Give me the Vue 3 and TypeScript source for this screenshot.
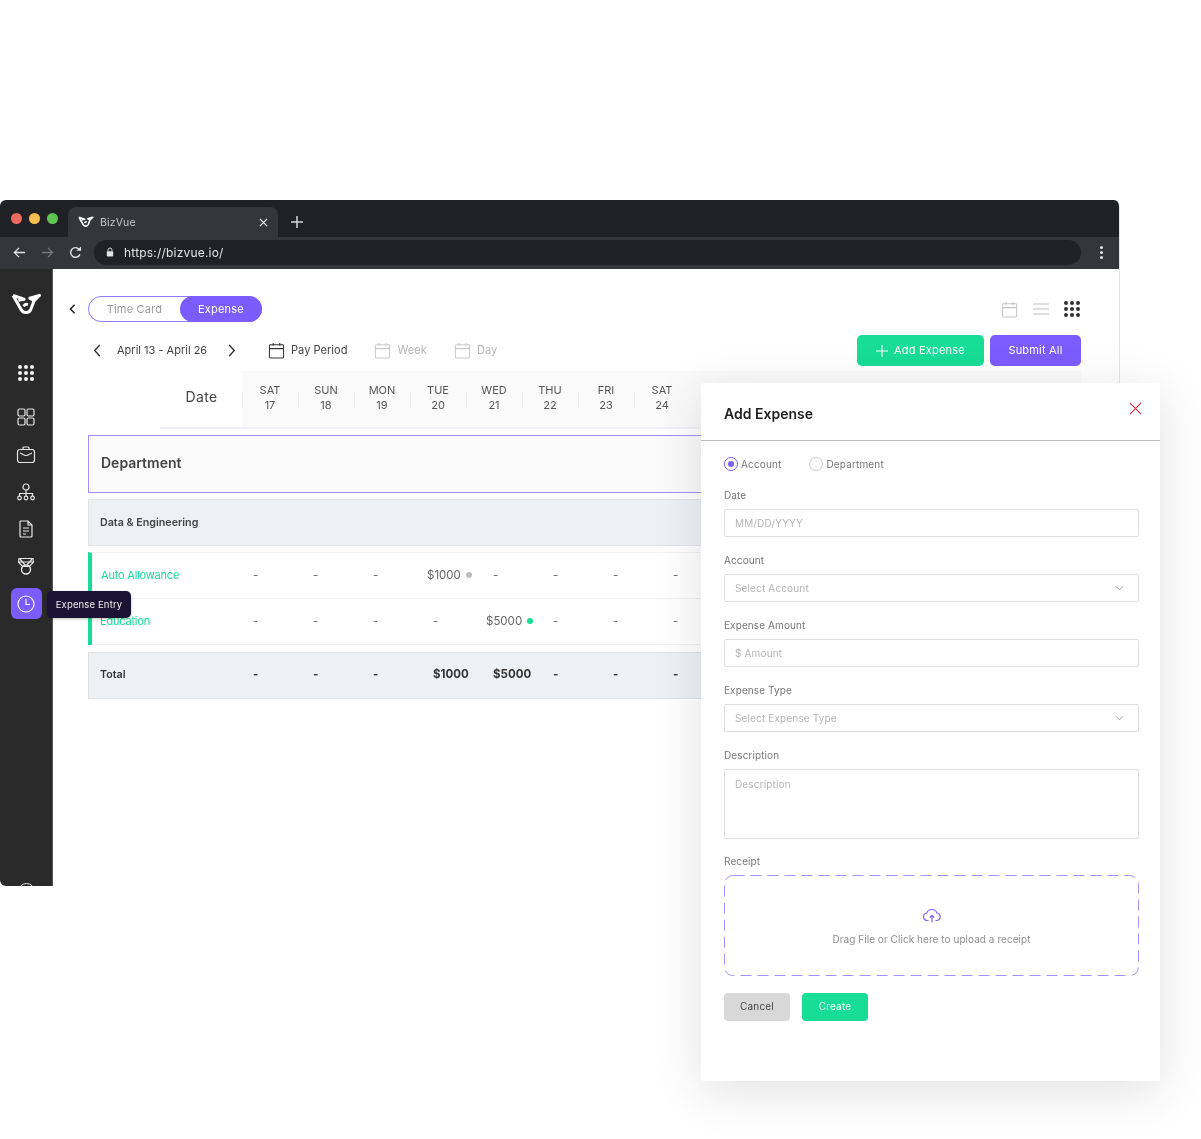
<script setup lang="ts">
const days = [
  ['SAT', '17'], ['SUN', '18'], ['MON', '19'], ['TUE', '20'], ['WED', '21'],
  ['THU', '22'], ['FRI', '23'], ['SAT', '24'],
]
const rows = [
  { name: 'Auto Allowance', cells: ['-', '-', '-', '$1000', '-', '-', '-', '-'], dot: 'grey' },
  { name: 'Education', cells: ['-', '-', '-', '-', '$5000', '-', '-', '-'], dot: 'green' },
]
const totals = ['-', '-', '-', '$1000', '$5000', '-', '-', '-']
const navIcons = ['dash', 'case', 'org', 'doc', 'medal']
</script>

<template>
  <div class="page">
    <div class="browser">
      <div class="tabstrip">
        <div class="lights"><i class="red"></i><i class="yellow"></i><i class="green"></i></div>
        <div class="tab">
          <svg class="favicon" viewBox="0 0 32 24" width="16" height="12" fill="none" stroke="#fff" stroke-width="3.2" stroke-linejoin="round"><path d="M2 2.5 L13.5 6.5 L7.5 7.5 M2 2.5 L10.5 17.5 A5.6 5.6 0 0 0 20.5 17 L24 8 L19.5 5.5 L29.5 2.5 L24 8"/><path d="M13 14 A3.8 3.8 0 0 1 17.5 12"/></svg>
          <span class="tabname">BizVue</span>
          <svg class="tabclose" viewBox="0 0 10 10" width="9" height="9"><path d="M1 1 L9 9 M9 1 L1 9" stroke="#e8e8e8" stroke-width="1.4"/></svg>
        </div>
        <svg class="newtab" viewBox="0 0 12 12" width="12" height="12"><path d="M6 0 V12 M0 6 H12" stroke="#d8d8d8" stroke-width="1.5"/></svg>
      </div>
      <div class="toolbar">
        <svg viewBox="0 0 14 14" width="13" height="13"><path d="M13 7 H1.5 M6.5 2 L1.5 7 L6.5 12" fill="none" stroke="#e4e4e4" stroke-width="1.4"/></svg>
        <svg viewBox="0 0 14 14" width="13" height="13"><path d="M1 7 H12.5 M7.5 2 L12.5 7 L7.5 12" fill="none" stroke="#77787b" stroke-width="1.4"/></svg>
        <svg viewBox="0 0 14 14" width="13" height="13"><path d="M11.8 9 A5.2 5.2 0 1 1 11 3.6" fill="none" stroke="#e4e4e4" stroke-width="1.5"/><path d="M8 5 H13 V0.5 Z" fill="#e4e4e4"/></svg>
        <div class="urlbar">
          <svg viewBox="0 0 10 12" width="8" height="10"><path d="M2.5 5 V3.5 A2.5 2.5 0 0 1 7.5 3.5 V5" fill="none" stroke="#e4e4e4" stroke-width="1.2"/><rect x="1" y="5" width="8" height="6.5" rx="1" fill="#e4e4e4"/></svg>
          <span>https://bizvue.io/</span>
        </div>
        <div class="kebab"><i></i><i></i><i></i></div>
      </div>
      <div class="app">
        <aside class="side">
          <svg class="logo" viewBox="0 0 32 24" width="31" height="23" fill="none" stroke="#fff" stroke-width="3.2" stroke-linejoin="round"><path d="M2 2.5 L13.5 6.5 L7.5 7.5 M2 2.5 L10.5 17.5 A5.6 5.6 0 0 0 20.5 17 L24 8 L19.5 5.5 L29.5 2.5 L24 8"/><path d="M13 14 A3.8 3.8 0 0 1 17.5 12"/></svg>
          <div class="dots light"><i v-for="n in 9" :key="n"></i></div>
          <div class="navicons">
            <svg v-for="ic in navIcons" :key="ic" viewBox="0 0 20 20" width="20" height="20" fill="none" stroke="#e6e6e6" stroke-width="1.2">
              <template v-if="ic === 'dash'">
                <rect x="2" y="2" width="7" height="7" rx="1.4"/><rect x="11" y="2" width="7" height="7" rx="1.4"/><rect x="2" y="11" width="7" height="7" rx="1.4"/><rect x="11" y="11" width="7" height="7" rx="1.4"/>
              </template>
              <template v-else-if="ic === 'case'">
                <rect x="1.5" y="4.5" width="17" height="13" rx="2.5"/><path d="M7 4.5 V3 A1 1 0 0 1 8 2 H12 A1 1 0 0 1 13 3 V4.5 M4 8 L9 10.5 H11 L16 8"/>
              </template>
              <template v-else-if="ic === 'org'">
                <circle cx="10" cy="5" r="3"/><circle cx="3.5" cy="16" r="1.8"/><circle cx="10" cy="16" r="1.8"/><circle cx="16.5" cy="16" r="1.8"/><path d="M10 8 V14 M3.5 14 V11.5 H16.5 V14"/>
              </template>
              <template v-else-if="ic === 'doc'">
                <path d="M4.5 2 H12 L16 6 V17 A1 1 0 0 1 15 18 H5 A1 1 0 0 1 4 17 V2.5 Z M12 2 V6 H16 M7 9 H13 M7 12 H13 M7 15 H10"/>
              </template>
              <template v-else>
                <path d="M3 2.5 H17 L17.5 6 L13.5 10.5 H6.5 L2.5 6 Z M4 3 L9 9 M16 3 L11 9 M3 6 H17"/><circle cx="10" cy="13.5" r="4.5" stroke-width="1.4"/>
              </template>
            </svg>
          </div>
          <div class="active">
            <svg viewBox="0 0 18 18" width="18" height="18" fill="none" stroke="#fff" stroke-width="1.1"><circle cx="9" cy="9" r="8"/><path d="M9 4 V9.5 H13"/></svg>
          </div>
          <div class="help"></div>
        </aside>

        <main class="content">
          <div class="toprow">
            <svg class="chev" viewBox="0 0 8 12" width="7" height="10"><path d="M6.5 1 L1.5 6 L6.5 11" fill="none" stroke="#222" stroke-width="1.8"/></svg>
            <div class="switch">
              <span class="off">Time Card</span>
              <span class="on">Expense</span>
            </div>
            <div class="views">
              <svg viewBox="0 0 18 18" width="17" height="17" fill="none" stroke="#c4c4c4" stroke-width="1.1"><rect x="1.5" y="3" width="15" height="14" rx="1"/><path d="M1.5 7 H16.5 M5.5 1 V4 M12.5 1 V4"/></svg>
              <svg viewBox="0 0 16 12" width="16" height="12" fill="none" stroke="#bdbdbd" stroke-width="1.2"><path d="M0 1 H16 M0 6 H16 M0 11 H16"/></svg>
              <div class="dots dark"><i v-for="n in 9" :key="n"></i></div>
            </div>
          </div>

          <div class="filterrow">
            <svg class="arrow" viewBox="0 0 8 14" width="8" height="13"><path d="M7 1 L1.5 7 L7 13" fill="none" stroke="#333" stroke-width="1.5"/></svg>
            <span class="range">April 13 - April 26</span>
            <svg class="arrow next" viewBox="0 0 8 14" width="8" height="13"><path d="M1 1 L6.5 7 L1 13" fill="none" stroke="#333" stroke-width="1.5"/></svg>
            <div class="period">
              <svg viewBox="0 0 18 18" width="17" height="17" fill="none" stroke="#333" stroke-width="1.1"><rect x="1.5" y="3" width="15" height="14" rx="1"/><path d="M1.5 7 H16.5 M5.5 1 V4 M12.5 1 V4"/></svg>
              <span>Pay Period</span>
            </div>
            <div class="period dim">
              <svg viewBox="0 0 18 18" width="17" height="17" fill="none" stroke="#c9c9c9" stroke-width="1.1"><rect x="1.5" y="3" width="15" height="14" rx="1"/><path d="M1.5 7 H16.5 M5.5 1 V4 M12.5 1 V4"/></svg>
              <span>Week</span>
            </div>
            <div class="period dim">
              <svg viewBox="0 0 18 18" width="17" height="17" fill="none" stroke="#c9c9c9" stroke-width="1.1"><rect x="1.5" y="3" width="15" height="14" rx="1"/><path d="M1.5 7 H16.5 M5.5 1 V4 M12.5 1 V4"/></svg>
              <span>Day</span>
            </div>
            <div class="actions">
              <button class="btn add"><svg viewBox="0 0 12 12" width="12" height="12"><path d="M6 0 V12 M0 6 H12" stroke="#fff" stroke-width="1.1"/></svg>Add Expense</button>
              <button class="btn submit">Submit All</button>
            </div>
          </div>

          <div class="dayhead">
            <div class="datelabel">Date</div>
            <div class="daycells">
              <div v-for="(d, i) in days" :key="i" class="day"><span>{{ d[0] }}</span><span>{{ d[1] }}</span></div>
            </div>
          </div>

          <div class="deptrow">Department</div>
          <div class="grouprow">Data &amp; Engineering</div>

          <div class="lines">
            <div v-for="r in rows" :key="r.name" class="line">
              <div class="linename">{{ r.name }}</div>
              <div v-for="(c, i) in r.cells" :key="i" class="cell" :class="{ amount: c !== '-' }">
                {{ c }}<i v-if="c !== '-'" class="dot" :class="r.dot"></i>
              </div>
            </div>
          </div>

          <div class="totalrow">
            <div class="totalname">Total</div>
            <div v-for="(c, i) in totals" :key="i" class="cell">{{ c }}</div>
          </div>
        </main>
      </div>
    </div>

    <section class="modal">
      <header class="modalhead">
        <h2>Add Expense</h2>
        <svg viewBox="0 0 14 14" width="13" height="13"><path d="M1 1 L13 13 M13 1 L1 13" stroke="#e0223c" stroke-width="1.1"/></svg>
      </header>
      <div class="form">
        <div class="radios">
          <label class="radio"><i class="ring sel"><b></b></i>Account</label>
          <label class="radio"><i class="ring"></i>Department</label>
        </div>
        <div class="field"><span class="flabel">Date</span><div class="input">MM/DD/YYYY</div></div>
        <div class="field"><span class="flabel">Account</span><div class="input">Select Account<svg viewBox="0 0 10 6" width="9" height="6"><path d="M1 1 L5 5 L9 1" fill="none" stroke="#999" stroke-width="1.1"/></svg></div></div>
        <div class="field"><span class="flabel">Expense Amount</span><div class="input">$ Amount</div></div>
        <div class="field"><span class="flabel">Expense Type</span><div class="input">Select Expense Type<svg viewBox="0 0 10 6" width="9" height="6"><path d="M1 1 L5 5 L9 1" fill="none" stroke="#999" stroke-width="1.1"/></svg></div></div>
        <div class="field"><span class="flabel">Description</span><div class="input area">Description</div></div>
        <div class="field receipt">
          <span class="flabel">Receipt</span>
          <div class="drop">
            <svg class="dash" width="415" height="101" viewBox="0 0 415 101"><rect x="0.5" y="0.5" width="414" height="100" rx="9" fill="none" stroke="#a48fff" stroke-width="1" stroke-dasharray="11 6"/></svg>
            <svg viewBox="0 0 20 16" width="20" height="16" fill="none" stroke="#7b5cff" stroke-width="1.1"><path d="M6.5 13.5 H5 A3.8 3.8 0 0 1 4.7 6 A5.5 5.5 0 0 1 15 6 A3.8 3.8 0 0 1 15 13.5 H13.5 M10 15.5 V8.5 M7.8 10.5 L10 8.3 L12.2 10.5"/></svg>
            <span>Drag File or Click here to upload a receipt</span>
          </div>
        </div>
        <div class="formbtns">
          <button class="fbtn cancel">Cancel</button>
          <button class="fbtn create">Create</button>
        </div>
      </div>
    </section>

    <div class="tooltip">Expense Entry</div>
  </div>
</template>

<style>
html, body { margin: 0; background: #fff; }
</style>

<style scoped>
* { box-sizing: border-box; }
.page {
  position: relative;
  width: 1201px;
  height: 1139px;
  padding-top: 200px;
  overflow: hidden;
  background: #fff;
  font-family: Inter, "Open Sans", sans-serif;
  color: #333;
  filter: blur(0.35px);
}
button { font-family: inherit; border: 0; }
i { display: block; }

.browser {
  width: 1120px;
  height: 686px;
  border-radius: 6px 6px 0 6px;
  overflow: hidden;
  display: flex;
  flex-direction: column;
  border-right: 1px solid #e4e4e4;
}
.tabstrip {
  height: 37px;
  background: #202124;
  display: flex;
  align-items: flex-end;
  flex: none;
}
.lights { display: flex; gap: 7px; padding: 0 0 13px 11px; width: 68px; }
.lights i { width: 11px; height: 11px; border-radius: 50%; }
.lights .red { background: #ed6a5e; }
.lights .yellow { background: #f5bf4f; }
.lights .green { background: #61c554; }
.tab {
  width: 210px;
  height: 30px;
  background: #35363a;
  border-radius: 8px 8px 0 0;
  display: flex;
  align-items: center;
  padding: 0 10px;
}
.favicon { margin-right: 6px; }
.tabname { font-size: 10.5px; color: #c8c8c8; letter-spacing: .15px; flex: 1; padding-top: 1px; }
.newtab { margin: 0 0 9px 13px; }
.toolbar {
  height: 32px;
  background: #35363a;
  display: flex;
  align-items: center;
  gap: 15px;
  padding: 0 0 2px 13px;
  flex: none;
}
.urlbar {
  width: 987px;
  height: 25px;
  margin-left: -3px;
  border-radius: 13px;
  background: #202124;
  display: flex;
  align-items: center;
  gap: 10px;
  padding-left: 12px;
  font-size: 12px;
  color: #e4e4e4;
  letter-spacing: .2px;
}
.kebab { display: flex; flex-direction: column; gap: 2px; margin-left: 4px; }
.kebab i { width: 3px; height: 3px; border-radius: 50%; background: #e4e4e4; }

.app { flex: 1; display: flex; min-height: 0; background: #fff; }
.side {
  width: 53px;
  flex: none;
  background: #2a2a2a;
  display: flex;
  flex-direction: column;
  align-items: center;
  padding-top: 24px;
  border-right: 1px solid #555;
  position: relative;
}
.logo { margin-bottom: 49px; flex: none; }
.dots { display: grid; grid-template-columns: repeat(3, 4px); gap: 2px; }
.dots i { width: 4px; height: 4px; border-radius: 50%; }
.dots.light i { background: #f2f2f2; }
.dots.dark i { background: #333; }
.navicons { display: flex; flex-direction: column; gap: 17px; margin-top: 26px; }
.navicons svg:first-child { margin-bottom: 1px; }
.active {
  width: 31px;
  height: 31px;
  border-radius: 6px;
  background: #7b5cff;
  display: flex;
  align-items: center;
  justify-content: center;
  margin-top: 12px;
}
.help {
  position: absolute;
  left: 18px;
  top: 614px;
  width: 17px;
  height: 17px;
  border: 1px solid #e6e6e6;
  border-radius: 50%;
}

.content { flex: 1; padding: 27px 38px 0 35px; min-width: 0; overflow: hidden; }
.toprow { display: flex; align-items: center; height: 26px; }
.chev { margin: 0 12px 0 -19px; }
.switch {
  width: 174px;
  height: 26px;
  border: 1px solid #8f7aff;
  border-radius: 13px;
  display: flex;
  font-size: 11px;
  letter-spacing: .2px;
  align-items: stretch;
}
.off { width: 91px; color: #9a9a9a; display: flex; align-items: center; justify-content: center; }
.on { flex: 1; margin: -1px -1px -1px 0; background: #7b5cff; color: #fff; border-radius: 13px; display: flex; align-items: center; justify-content: center; }
.views { margin-left: auto; display: flex; align-items: center; gap: 15px; padding-right: 1px; }

.filterrow { display: flex; align-items: center; height: 31px; margin-top: 13px; padding-left: 5px; }
.arrow { flex: none; }
.range { font-size: 11px; color: #444; margin: -2px 0 0 16px; width: 92px; white-space: nowrap; }
.next { margin-left: 19px; margin-right: 32px; }
.period { display: flex; align-items: center; gap: 6px; font-size: 11.1px; color: #444; margin-right: 27px; }
.period span { margin-top: -2px; }
.period.dim { color: #b5b5b5; }
.actions { margin-left: auto; display: flex; gap: 6px; }
.btn {
  height: 31px;
  border-radius: 5px;
  color: #fff;
  font-size: 11px;
  letter-spacing: .2px;
  display: flex;
  align-items: center;
  justify-content: center;
  gap: 6px;
  padding: 0 0 2px;
}
.add { width: 127px; background: #17dd96; }
.add svg { margin-top: 2px; }
.submit { width: 91px; background: #7b5cff; }

.dayhead { display: flex; margin: 5px 0 0 72px; height: 58px; border-bottom: 2px solid #f0f2f5; }
.datelabel { width: 82px; display: flex; align-items: center; justify-content: center; font-size: 14px; color: #444; padding: 0 0 6px 1px; letter-spacing: .3px; }
.daycells { flex: 1; display: flex; background: #fafafa; align-items: center; overflow: hidden; }
.day {
  position: relative;
  flex: none;
  width: 56px;
  height: 34px;
  margin-top: -4px;
  display: flex;
  flex-direction: column;
  align-items: center;
  justify-content: center;
  gap: 1px;
  font-size: 11px;
  line-height: 14px;
  color: #555;
}
.day::before {
  content: "";
  position: absolute;
  left: 0;
  top: 12px;
  width: 1px;
  height: 16px;
  background: #eaeaea;
}

.deptrow {
  margin-top: 6px;
  height: 58px;
  border: 1px solid #a08dff;
  background: #fafafa;
  display: flex;
  align-items: center;
  padding: 0 0 3px 12px;
  font-size: 14px;
  font-weight: 600;
  color: #444;
}
.grouprow {
  margin-top: 6px;
  height: 47px;
  background: #eef1f4;
  border: 1px solid #e2e4e6;
  display: flex;
  align-items: center;
  padding: 0 0 1px 11px;
  font-size: 10.7px;
  font-weight: 600;
  color: #444;
}
.lines { margin-top: 6px; border-left: 4px solid #17dd96; border-top: 1px solid #f3f3f3; }
.line {
  height: 46px;
  display: grid;
  grid-template-columns: 161px repeat(8, 60px);
  align-items: center;
  border-bottom: 1px solid #f0f0f0;
  padding-bottom: 2px;
  font-size: 11.5px;
  color: #666;
}
.linename { color: #17dd96; padding-left: 9px; font-size: 11px; letter-spacing: -.2px; }
.line:last-child .linename { padding-left: 8px; }
.line:last-child .amount { margin-left: -7px; }
.cell { display: flex; align-items: center; white-space: nowrap; }
.amount { margin-left: -6px; }
.dot { width: 6px; height: 6px; border-radius: 50%; margin-left: 5px; margin-top: 1px; }
.dot.grey { background: #bdbdbd; }
.dot.green { background: #17dd96; }
.totalrow {
  margin-top: 7px;
  height: 47px;
  background: #eef1f4;
  border: 1px solid #e0e2e4;
  padding-bottom: 3px;
  display: grid;
  grid-template-columns: 164px repeat(8, 60px);
  align-items: center;
  font-size: 11.5px;
  font-weight: 700;
  color: #333;
}
.totalname { padding-left: 11px; font-size: 10.7px; font-weight: 600; }

.modal {
  position: absolute;
  left: 701px;
  top: 383px;
  width: 459px;
  height: 698px;
  background: #fff;
  border-radius: 4px 0 0 4px;
  box-shadow: 0 10px 50px rgba(40, 40, 60, .14);
}
.modalhead {
  height: 58px;
  border-bottom: 1px solid #bdbdbd;
  display: flex;
  align-items: center;
  justify-content: space-between;
  padding: 0 18px 0 23px;
}
.modalhead h2 { margin: 3px 0 0; font-size: 14px; font-weight: 600; color: #222; }
.modalhead svg { margin-top: -6px; }
.form { padding: 0 21px 0 23px; }
.radios { display: flex; gap: 28px; height: 47px; align-items: center; padding-bottom: 1px; }
.radio { display: flex; align-items: center; gap: 3px; font-size: 10px; color: #777; letter-spacing: .15px; }
.ring { width: 14px; height: 14px; border: 1px solid #ccc; border-radius: 50%; display: flex; align-items: center; justify-content: center; }
.ring.sel { border-color: #7b5cff; border-width: 1.5px; }
.ring b { width: 6px; height: 6px; border-radius: 50%; background: #7b5cff; }
.field { display: flex; flex-direction: column; margin-bottom: 16px; }
.flabel { height: 14px; line-height: 14px; font-size: 10px; color: #777; letter-spacing: .1px; margin-bottom: 7px; }
.input {
  height: 28px;
  border: 1px solid #ddd;
  border-radius: 2px;
  display: flex;
  align-items: center;
  justify-content: space-between;
  padding: 0 14px 1px 10px;
  font-size: 10px;
  color: #b5b5b5;
  letter-spacing: .15px;
}
.area { height: 70px; align-items: flex-start; padding-top: 8px; }
.receipt { margin-top: -1px; margin-bottom: 0; }
.drop {
  position: relative;
  height: 101px;
  display: flex;
  flex-direction: column;
  align-items: center;
  justify-content: center;
  gap: 10px;
  padding-top: 1px;
  font-size: 10px;
  color: #8e8e8e;
  letter-spacing: .05px;
}
.dash { position: absolute; left: 0; top: 0; }
.formbtns { display: flex; gap: 12px; margin-top: 17px; }
.fbtn { width: 66px; height: 28px; border-radius: 4px; font-size: 10px; letter-spacing: .2px; padding: 0 0 2px; }
.cancel { background: #d8d8d8; color: #444; }
.create { background: #17dd96; color: #fff; }

.tooltip {
  position: absolute;
  left: 47px;
  top: 591px;
  width: 84px;
  height: 27px;
  background: #1a1333;
  border-radius: 5px;
  color: #eee;
  font-size: 9.5px;
  letter-spacing: .15px;
  display: flex;
  align-items: center;
  justify-content: center;
  box-shadow: 0 1px 3px rgba(0,0,0,.25);
}
.tooltip::before {
  content: "";
  position: absolute;
  left: -4px;
  top: 9px;
  border: 4px solid transparent;
  border-left: 0;
  border-right-color: #2a2244;
}
</style>
